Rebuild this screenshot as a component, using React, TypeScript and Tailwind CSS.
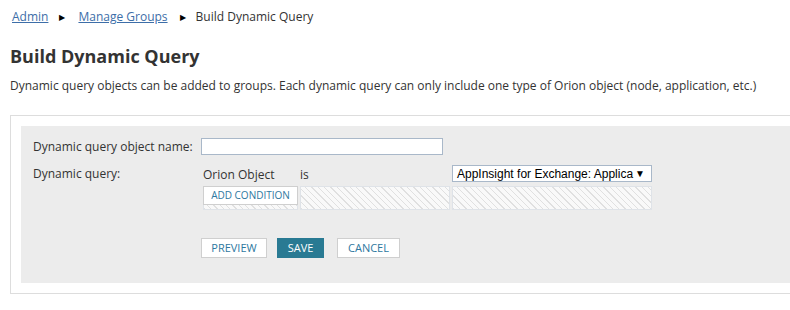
import React from "react";

const hatch =
  "bg-[repeating-linear-gradient(45deg,#e0e0e0_0px,#e0e0e0_1px,#f9f9f9_1px,#f9f9f9_4.5px)]";

export default function App() {
  return (
    <div className="w-[790px] h-[310px] overflow-hidden bg-white text-[#333] font-['Open_Sans',sans-serif]">
      <div className="flex items-center pl-[12px] pt-[9px] text-[12px] leading-[16px]">
        <a className="text-[#3d6ea8] underline">Admin</a>
        <span className="ml-[11px] mr-[13px] text-[8px] text-black">▶</span>
        <a className="text-[#3d6ea8] underline">Manage Groups</a>
        <span className="ml-[12px] mr-[10px] text-[8px] text-black">▶</span>
        <span>Build Dynamic Query</span>
      </div>
      <h1 className="pl-[10px] mt-[18px] text-[18px] leading-[26px] font-bold text-[#333]">
        Build Dynamic Query
      </h1>
      <p className="pl-[10px] mt-[9px] text-[12px] leading-[16px]">
        Dynamic query objects can be added to groups. Each dynamic query can only include one type of Orion object (node, application, etc.)
      </p>
      <div className="ml-[10px] mt-[21px] border border-r-0 border-[#dddddd] pl-[10px] pt-[10px] pb-[10px]">
        <div className="bg-[#ececec] pl-[12px] pt-[12px] pb-[25px]">
          <div className="flex items-center">
            <div className="w-[168px] text-[12px] leading-[16px]">Dynamic query object name:</div>
            <div className="w-[242px] h-[17px] bg-white border border-[#a9b8c9]" />
          </div>
          <div className="flex mt-[10px]">
            <div className="w-[170px] text-[12px] leading-[16px] pt-[1px]">Dynamic query:</div>
            <div className="grid grid-cols-[95px_150px_200px] gap-x-[2px] gap-y-[3px]">
              <div className="text-[12px] leading-[16px] pt-[2px]">Orion Object</div>
              <div className="text-[12px] leading-[16px] pt-[2px]">is</div>
              <div className="h-[17px] bg-white border border-[#a9b8c9] flex items-center justify-between pl-[4px] pr-[6px] font-['Liberation_Sans',sans-serif] text-[12px] text-black whitespace-nowrap overflow-hidden">
                <span>AppInsight for Exchange: Applica</span>
                <span className="text-[10px]">▼</span>
              </div>
              <div className={`h-[24px] border border-[#dfe3e8] ${hatch}`}>
                <div className="h-[19px] bg-white border border-[#cfcfcf] -mt-px -mx-px flex items-center justify-center text-[10px] text-[#2e78a0]">
                  ADD CONDITION
                </div>
              </div>
              <div className={`h-[24px] border border-[#dfe3e8] ${hatch}`} />
              <div className={`h-[24px] border border-[#dfe3e8] ${hatch}`} />
            </div>
          </div>
          <div className="flex items-center mt-[28px] ml-[168px] text-[11px]">
            <button className="w-[66px] h-[20px] bg-white border border-[#cfcfcf] text-[#2e78a0]">PREVIEW</button>
            <button className="ml-[10px] w-[47px] h-[20px] bg-[#297a93] text-white">SAVE</button>
            <button className="ml-[13px] w-[63px] h-[20px] bg-white border border-[#cfcfcf] text-[#2e78a0]">CANCEL</button>
          </div>
        </div>
      </div>
    </div>
  );
}
